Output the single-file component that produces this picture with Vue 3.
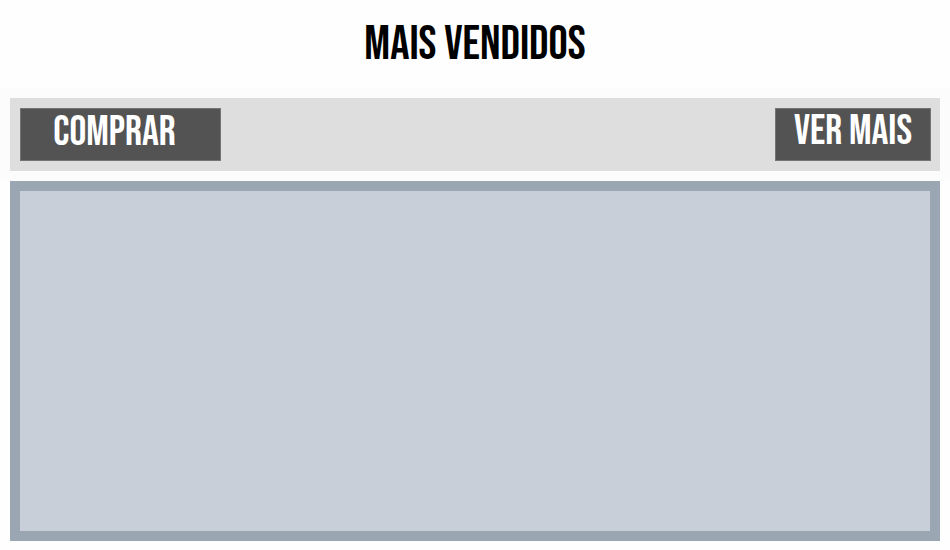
<script setup>
const title = 'MAIS VENDIDOS'
</script>

<template>
  <main class="page">
    <h1 class="title">{{ title }}</h1>
    <section class="band">
      <div class="toolbar">
        <button type="button" class="action buy">COMPRAR</button>
        <button type="button" class="action more">VER MAIS</button>
      </div>
    </section>
    <section class="panel" aria-label="Produtos"></section>
  </main>
</template>

<style>
body {
  margin: 0;
  background: #fefefe;
}
</style>

<style scoped>
.page {
  box-sizing: border-box;
  display: flex;
  flex-direction: column;
  min-height: 100vh;
  padding-bottom: 9px;
  font-family: "Bebas Neue", "Liberation Sans Narrow", "Liberation Sans", sans-serif;
}

.title {
  margin: 0;
  padding: 21px 0 19px;
  text-align: center;
  font-size: 48px;
  line-height: 48px;
  font-weight: 400;
  color: #000;
}

.band {
  padding: 10px;
  background: #fcfcfc;
}

.toolbar {
  display: flex;
  justify-content: space-between;
  padding: 10px 9px 10px 10px;
  background: #dedede;
}

.action {
  box-sizing: border-box;
  height: 53px;
  margin: 0;
  border: 1px solid #747474;
  border-radius: 0;
  background: #535353;
  color: #fff;
  font-family: inherit;
  font-size: 42px;
  line-height: 44px;
  font-weight: 400;
  white-space: nowrap;
  cursor: pointer;
}

.buy {
  width: 201px;
  padding: 0 12px 4px 0;
}

.more {
  width: 156px;
  padding: 0 0 6px;
}

.panel {
  flex: 1;
  margin: 0 10px;
  border: 10px solid #9aa6b2;
  background: #c8cfd9;
}
</style>
